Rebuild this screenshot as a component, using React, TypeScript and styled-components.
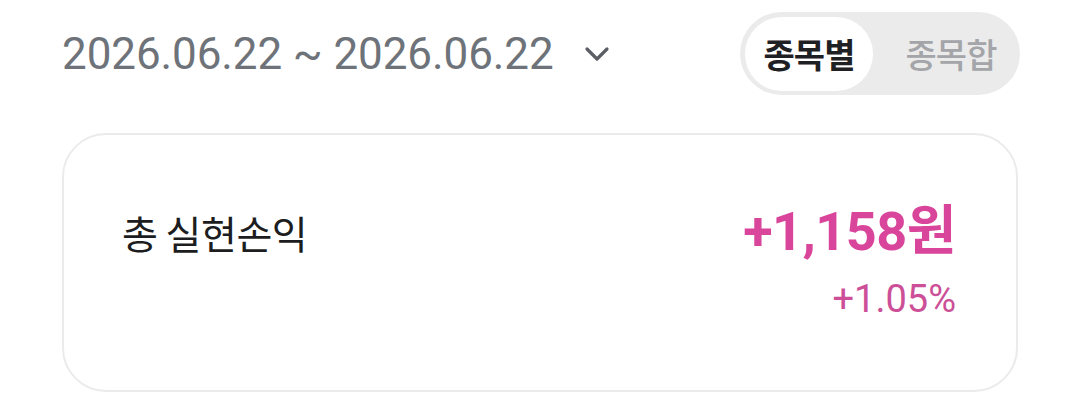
import styled, { createGlobalStyle } from 'styled-components';

const GlobalStyle = createGlobalStyle`
    body {
        margin: 0;
        background: #ffffff;
        font-family: Roboto, "Noto Sans CJK KR", sans-serif;
    }
`;

const App = () => {
    return (
        <>
            <GlobalStyle />
            <StyledPage>
                <StyledHeader>
                    <StyledDateButton>
                        <StyledDateText>2026.06.22 ~ 2026.06.22</StyledDateText>
                        <svg width="26" height="18" viewBox="0 0 26 18" fill="none">
                            <path d="M3 4l10 10L23 4" stroke="#5b5e64" strokeWidth="3.2" strokeLinecap="round" strokeLinejoin="round" />
                        </svg>
                    </StyledDateButton>
                    <StyledSegment>
                        <StyledSegmentItem active>종목별</StyledSegmentItem>
                        <StyledSegmentItem>종목합</StyledSegmentItem>
                    </StyledSegment>
                </StyledHeader>
                <StyledCard>
                    <StyledLabel>총 실현손익</StyledLabel>
                    <StyledValues>
                        <StyledAmount>+1,158원</StyledAmount>
                        <StyledRate>+1.05%</StyledRate>
                    </StyledValues>
                </StyledCard>
            </StyledPage>
        </>
    );
};

const StyledPage = styled.div`
    width: 1080px;
    padding: 12px 62px 0;
    box-sizing: border-box;
`;

const StyledHeader = styled.div`
    display: flex;
    align-items: center;
    justify-content: space-between;
`;

const StyledDateButton = styled.div`
    display: flex;
    align-items: center;
    gap: 30px;
    cursor: pointer;
`;

const StyledDateText = styled.div`
    font-family: Roboto, sans-serif;
    font-size: 44px;
    color: #6e737a;
    letter-spacing: -0.1px;
`;

const StyledSegment = styled.div`
    display: flex;
    align-items: center;
    height: 83px;
    padding: 0 5px;
    margin-right: -2px;
    box-sizing: border-box;
    background: #ebebeb;
    border-radius: 42px;
`;

const StyledSegmentItem = styled.div<{ active?: boolean }>`
    height: 74px;
    width: 128px;
    margin-right: ${({ active }) => (active ? '14px' : '0')};
    display: flex;
    align-items: center;
    justify-content: center;
    border-radius: 37px;
    font-family: "Noto Sans CJK KR", sans-serif;
    font-size: 34px;
    font-weight: ${({ active }) => (active ? 700 : 500)};
    color: ${({ active }) => (active ? '#1f2024' : '#a3a5a9')};
    background: ${({ active }) => (active ? '#ffffff' : 'transparent')};
    letter-spacing: -1px;
`;

const StyledCard = styled.div`
    margin-top: 38px;
    height: 259px;
    box-sizing: border-box;
    border: 2px solid #ebebeb;
    border-radius: 44px;
    padding: 65px 60px 0 58px;
    display: flex;
    justify-content: space-between;
    align-items: flex-start;
`;

const StyledLabel = styled.div`
    font-family: "Noto Sans CJK KR", sans-serif;
    font-size: 39px;
    font-weight: 400;
    color: #1c1d21;
    line-height: 64px;
    letter-spacing: -0.5px;
`;

const StyledValues = styled.div`
    display: flex;
    flex-direction: column;
    align-items: flex-end;
`;

const StyledAmount = styled.div`
    font-family: Roboto, "Noto Sans CJK KR", sans-serif;
    font-size: 54px;
    font-weight: 700;
    line-height: 64px;
    color: #d9459b;
    letter-spacing: -0.5px;
`;

const StyledRate = styled.div`
    margin-top: 12px;
    font-family: Roboto, sans-serif;
    font-size: 38px;
    line-height: 46px;
    color: #cc4f97;
`;

export default App;
